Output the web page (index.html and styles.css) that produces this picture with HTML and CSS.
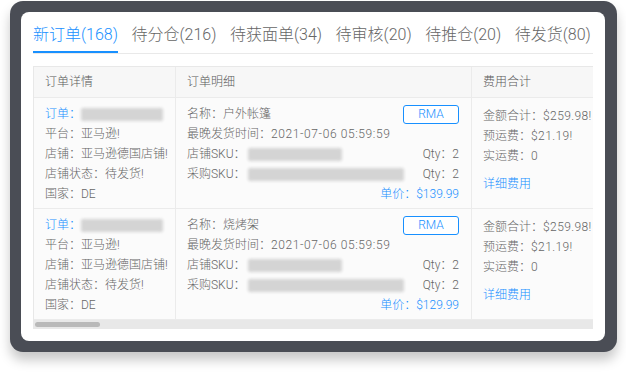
FILE: index.html
```html
<!DOCTYPE html>
<html lang="zh-CN">
<head>
<meta charset="utf-8">
<link rel="stylesheet" href="styles.css">
</head>
<body>
<div class="device">
  <div class="screen">
    <div class="tabs">
      <div class="tab active">新订单(168)</div>
      <div class="tab">待分仓(216)</div>
      <div class="tab">待获面单(34)</div>
      <div class="tab">待审核(20)</div>
      <div class="tab">待推仓(20)</div>
      <div class="tab">待发货(80)</div>
    </div>
    <div class="scroll">
      <div class="grid">
        <div class="th">订单详情</div>
        <div class="th">订单明细</div>
        <div class="th">费用合计</div>

        <div class="td c1">
          <div class="line"><span class="blue">订单：</span><span class="blur b-order"></span></div>
          <div class="line">平台：亚马逊!</div>
          <div class="line">店铺：亚马逊德国店铺!</div>
          <div class="line">店铺状态：待发货!</div>
          <div class="line">国家：DE</div>
        </div>
        <div class="td c2">
          <div class="line top"><span>名称：户外帐篷</span><span class="rma">RMA</span></div>
          <div class="line">最晚发货时间：<span class="date">2021-07-06 05:59:59</span></div>
          <div class="line split"><span class="lab">店铺SKU：<span class="blur b-sku1"></span></span><span>Qty：2</span></div>
          <div class="line split"><span class="lab">采购SKU：<span class="blur b-sku2"></span></span><span>Qty：2</span></div>
          <div class="line right blue">单价：$139.99</div>
        </div>
        <div class="td c3">
          <div class="line">金额合计：<span class="num">$259.98!</span></div>
          <div class="line">预运费：<span class="num">$21.19!</span></div>
          <div class="line">实运费：0</div>
          <div class="line blue more">详细费用</div>
        </div>

        <div class="td c1">
          <div class="line"><span class="blue">订单：</span><span class="blur b-order"></span></div>
          <div class="line">平台：亚马逊!</div>
          <div class="line">店铺：亚马逊德国店铺!</div>
          <div class="line">店铺状态：待发货!</div>
          <div class="line">国家：DE</div>
        </div>
        <div class="td c2">
          <div class="line top"><span>名称：烧烤架</span><span class="rma">RMA</span></div>
          <div class="line">最晚发货时间：<span class="date">2021-07-06 05:59:59</span></div>
          <div class="line split"><span class="lab">店铺SKU：<span class="blur b-sku1"></span></span><span>Qty：2</span></div>
          <div class="line split"><span class="lab">采购SKU：<span class="blur b-sku2"></span></span><span>Qty：2</span></div>
          <div class="line right blue">单价：$129.99</div>
        </div>
        <div class="td c3">
          <div class="line">金额合计：<span class="num">$259.98!</span></div>
          <div class="line">预运费：<span class="num">$21.19!</span></div>
          <div class="line">实运费：0</div>
          <div class="line blue more">详细费用</div>
        </div>
      </div>
      <div class="scrollbar"><div class="thumb"></div></div>
    </div>
  </div>
</div>
</body>
</html>
```
FILE: styles.css
```css
* { box-sizing: border-box; }
html, body { margin: 0; padding: 0; background: #ffffff; }
body {
  font-family: Roboto, "Noto Sans CJK SC", sans-serif;
  font-weight: 300;
  color: #666666;
  width: 626px;
  height: 372px;
  overflow: hidden;
}
.device {
  margin: 1px 0 0 10px;
  width: 607px;
  height: 351px;
  background: #4a4d55;
  border-radius: 13px;
  padding: 11px 12px 11px 11px;
  box-shadow: 0 8px 12px rgba(0, 0, 0, 0.22);
}
.screen {
  background: #ffffff;
  border-radius: 8px;
  height: 100%;
  padding: 12px 12px 0 12px;
  overflow: hidden;
}
.tabs {
  display: flex;
  gap: 13.5px;
  border-bottom: 1px solid #e9e9e9;
  width: 560px;
}
.tab {
  font-size: 16px;
  line-height: 22px;
  padding-bottom: 5px;
  border-bottom: 2px solid transparent;
  color: #666666;
  white-space: nowrap;
}
.tab.active {
  color: #1890ff;
  border-bottom-color: #1890ff;
}
.scroll {
  margin-top: 12px;
  width: 560px;
  overflow: hidden;
  border-top: 1px solid #e8e8e8;
  border-left: 1px solid #e8e8e8;
}
.grid {
  display: grid;
  grid-template-columns: 142px 296px 180px;
  width: 618px;
}
.th {
  height: 31px;
  background: #f7f7f7;
  font-size: 12px;
  line-height: 31px;
  padding-left: 11px;
  color: #5a5a5a;
  border-right: 1px solid #ebebeb;
  border-bottom: 1px solid #ebebeb;
}
.td {
  height: 111px;
  background: #fbfbfb;
  font-size: 12px;
  border-right: 1px solid #ebebeb;
  border-bottom: 1px solid #ebebeb;
  padding: 6px 12px 0 11px;
}
.c3 { padding-top: 8px; }
.line {
  line-height: 20px;
  height: 20px;
  white-space: nowrap;
  display: flex;
  align-items: center;
}
.date { letter-spacing: 0.6px; }
.num { letter-spacing: 0.4px; }
.split { justify-content: space-between; }
.right { justify-content: flex-end; }
.top { justify-content: space-between; }
.lab { display: flex; align-items: center; }
.blue { color: #1890ff; }
.more { margin-top: 8px; }
.rma {
  width: 56px;
  height: 19px;
  border: 1px solid #1890ff;
  border-radius: 3px;
  background: #ffffff;
  color: #1890ff;
  font-size: 12px;
  line-height: 17px;
  text-align: center;
  margin-top: 1px;
}
.blur {
  display: inline-block;
  background: #d4d4d4;
  height: 13px;
  filter: blur(1.5px);
  border-radius: 2px;
}
.b-order { width: 83px; }
.b-sku1 { width: 94px; margin-left: 2px; }
.b-sku2 { width: 156px; margin-left: 2px; }
.scrollbar {
  height: 9px;
  background: #e8e8e8;
  padding: 2px 0 0 1px;
}
.thumb {
  width: 65px;
  height: 5px;
  border-radius: 3px;
  background: #b9b9b9;
}
```
